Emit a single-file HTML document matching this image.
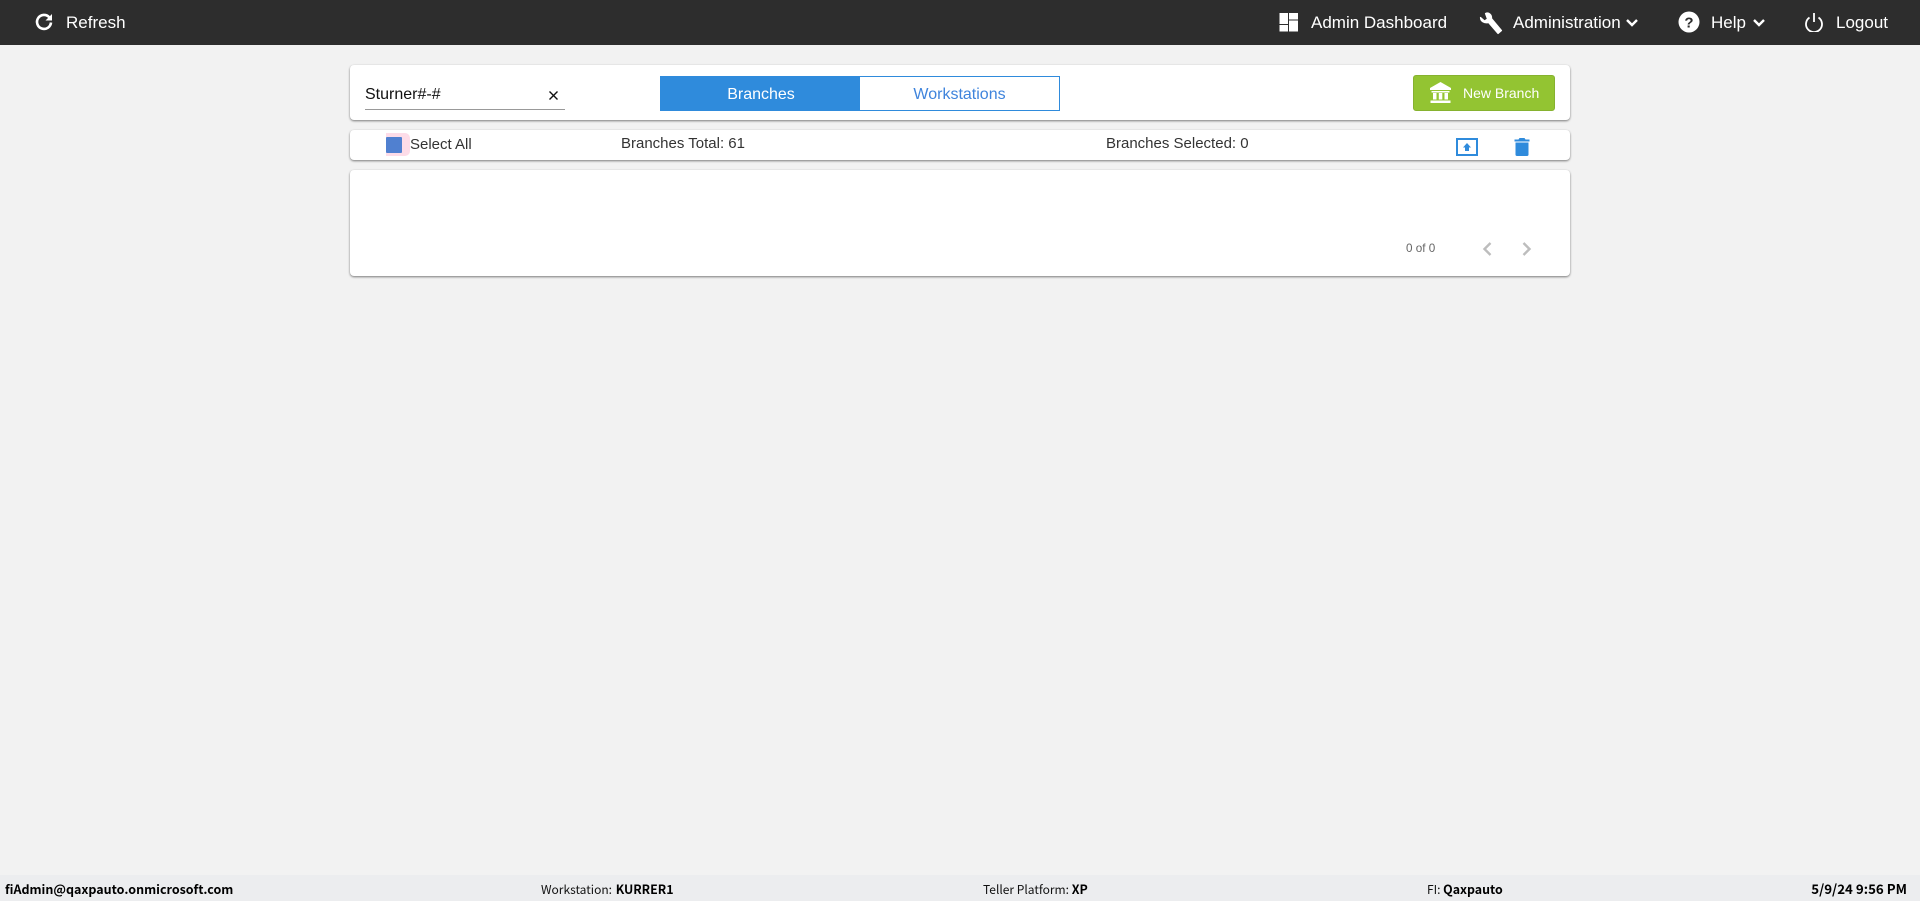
<!DOCTYPE html>
<html><head><meta charset="utf-8"><title>Branches</title>
<style>
html,body{margin:0;padding:0;width:1920px;height:901px;overflow:hidden;background:#f2f2f2;font-family:"Liberation Sans",Arial,sans-serif;}
.a{position:absolute;white-space:nowrap;}
#nav{position:absolute;left:0;top:0;width:1920px;height:45px;background:#2d2d2d;}
.n{position:absolute;top:13px;height:20px;line-height:20px;font-size:17px;color:#fff;white-space:nowrap;}
.card{position:absolute;left:350px;width:1220px;background:#fff;border-radius:4px;box-shadow:0 1px 2px rgba(0,0,0,.5);}
.t{position:absolute;font-size:15px;line-height:18px;color:#333;white-space:nowrap;}
#foot{position:absolute;left:0;top:875px;width:1920px;height:26px;background:#ecedef;font-family:"Noto Sans CJK JP","Liberation Sans",sans-serif;font-size:12px;color:#111;}
#foot span{position:absolute;top:5px;line-height:18px;white-space:nowrap;}
b{font-weight:700;color:#000;font-size:12.4px;}
svg{position:absolute;display:block;}
</style></head><body>
<div id="nav">
<svg style="left:34px;top:12px" width="20" height="20" viewBox="0 0 20 20"><path d="M15.2 5.2A7 7 0 1 0 17 10.5" fill="none" stroke="#fff" stroke-width="2.6"/><path d="M11.5 8.5H18V2z" fill="#fff"/></svg>
<div class="n" style="left:66px">Refresh</div>
<svg style="left:1279px;top:13px" width="20" height="19" viewBox="0 0 20 19" fill="#fff"><rect x="0.500" y="0" width="8.500" height="11"/><rect x="10" y="0" width="9" height="6.500"/><rect x="0.500" y="12" width="8.500" height="6.500"/><rect x="10" y="7.500" width="9" height="11"/></svg>
<div class="n" style="left:1311px">Admin Dashboard</div>
<svg style="left:1479px;top:11px" width="25" height="24" viewBox="0 0 25 24"><path d="M1.500 6.500 5.500 10 8.500 8 6.500 2.500C9.500 1 13 3.500 12.500 7.500L22.500 19.500 19 22.500 9.500 11.500C5.500 12.500 1.500 10.500 1.500 6.500Z" fill="#fff" stroke="#fff" stroke-width="1.200" stroke-linejoin="round"/></svg>
<div class="n" style="left:1513px">Administration</div>
<svg style="left:1625px;top:18px" width="14" height="10" viewBox="0 0 14 10"><path d="M2 2 7 7 12 2" fill="none" stroke="#fff" stroke-width="2.400"/></svg>
<svg style="left:1678px;top:11px" width="22" height="22" viewBox="0 0 22 22"><circle cx="11" cy="11" r="10.500" fill="#fff"/><text x="11" y="16.500" text-anchor="middle" font-family="Liberation Sans" font-weight="700" font-size="15" fill="#2d2d2d">?</text></svg>
<div class="n" style="left:1711px">Help</div>
<svg style="left:1752px;top:18px" width="14" height="10" viewBox="0 0 14 10"><path d="M2 2 7 7 12 2" fill="none" stroke="#fff" stroke-width="2.400"/></svg>
<svg style="left:1803px;top:12px" width="22" height="20" viewBox="0 0 22 20"><path d="M6.500 5.500A8 8 0 1 0 15.500 5.500" fill="none" stroke="#fff" stroke-width="1.800"/><path d="M11 1V10" stroke="#fff" stroke-width="1.800"/></svg>
<div class="n" style="left:1836px">Logout</div>
</div>

<div class="card" style="top:65px;height:55px"></div>
<div class="a" style="left:365px;top:85px;font-size:16px;line-height:20px;color:#111">Sturner#-#</div>
<div class="a" style="left:365px;top:109px;width:200px;height:1px;background:#999"></div>
<svg style="left:548px;top:90px" width="11" height="11" viewBox="0 0 11 11"><path d="M1.500 1.500 9.500 9.500M9.500 1.500 1.500 9.500" stroke="#111" stroke-width="1.400"/></svg>
<div class="a" style="left:660px;top:76px;width:202px;height:35px;background:#2f8bdc;color:#fff;font-size:16px;line-height:38px;text-align:center;clip-path:inset(0 2px 0 0)">Branches</div>
<div class="a" style="left:860px;top:76px;width:199px;height:33px;border:1px solid #2f8bdc;border-left:0;background:#fff;color:#3f84dc;font-size:16px;line-height:36px;text-align:center">Workstations</div>
<div class="a" style="left:1413px;top:75px;width:140px;height:34px;background:#93c432;border:1px solid #86b22f;border-radius:3px"></div>
<svg style="left:1429px;top:82px" width="23" height="22" viewBox="0 0 23 22" fill="#fff"><path d="M11.500 0 22 6V8H1V6Z"/><rect x="2.500" y="9" width="18" height="1.500"/><rect x="4" y="11" width="3.500" height="6.500"/><rect x="9.800" y="11" width="3.500" height="6.500"/><rect x="15.500" y="11" width="3.500" height="6.500"/><rect x="1.500" y="18.500" width="20" height="2.500"/></svg>
<div class="a" style="left:1463px;top:84px;font-size:14px;line-height:18px;color:#fff">New Branch</div>

<div class="card" style="top:130px;height:30px"></div>
<div class="a" style="left:386px;top:133px;width:24px;height:23px;background:#fddce8;border-radius:0 5px 5px 0"></div>
<div class="a" style="left:386px;top:137px;width:16px;height:16px;background:#5080d0;border-radius:1px"></div>
<div class="t" style="left:410px;top:136px">Select All</div>
<div class="t" style="left:621px;top:135px">Branches Total: 61</div>
<div class="t" style="left:1106px;top:135px">Branches Selected: 0</div>
<svg style="left:1456px;top:138px" width="22" height="18" viewBox="0 0 22 18"><rect x="1" y="1" width="20" height="16" fill="none" stroke="#2f8bdc" stroke-width="2"/><path d="M11 5 15 9.500H13V13H9V9.500H7Z" fill="#2f8bdc"/></svg>
<svg style="left:1514px;top:138px" width="16" height="18" viewBox="0 0 16 18" fill="#2f8bdc"><path d="M5.500 0H10.500L11.500 1.500H15.500V3.500H.5V1.500H4.500Z"/><path d="M1.500 4.500H14.500V16.500A1.500 1.500 0 0 1 13 18H3A1.500 1.500 0 0 1 1.500 16.500Z"/></svg>

<div class="card" style="top:170px;height:106px"></div>
<div class="a" style="left:1406px;top:242px;font-size:11.700px;line-height:14px;color:#666">0 of 0</div>
<svg style="left:1481px;top:241px" width="12" height="16" viewBox="0 0 12 16"><path d="M9.500 2 3.500 8 9.500 14" fill="none" stroke="#bdbdbd" stroke-width="2.400"/></svg>
<svg style="left:1521px;top:241px" width="12" height="16" viewBox="0 0 12 16"><path d="M2.500 2 8.500 8 2.500 14" fill="none" stroke="#bdbdbd" stroke-width="2.400"/></svg>

<div id="foot">
<span style="left:5px"><b style="font-size:12.500px">fiAdmin@qaxpauto.onmicrosoft.com</b></span>
<span style="left:541px">Workstation: <b style="margin-left:1px">KURRER1</b></span>
<span style="left:983px">Teller Platform: <b>XP</b></span>
<span style="left:1427px">FI: <b>Qaxpauto</b></span>
<span style="right:13px"><b style="font-size:13.300px">5/9/24 9:56 PM</b></span>
</div>
</body></html>
